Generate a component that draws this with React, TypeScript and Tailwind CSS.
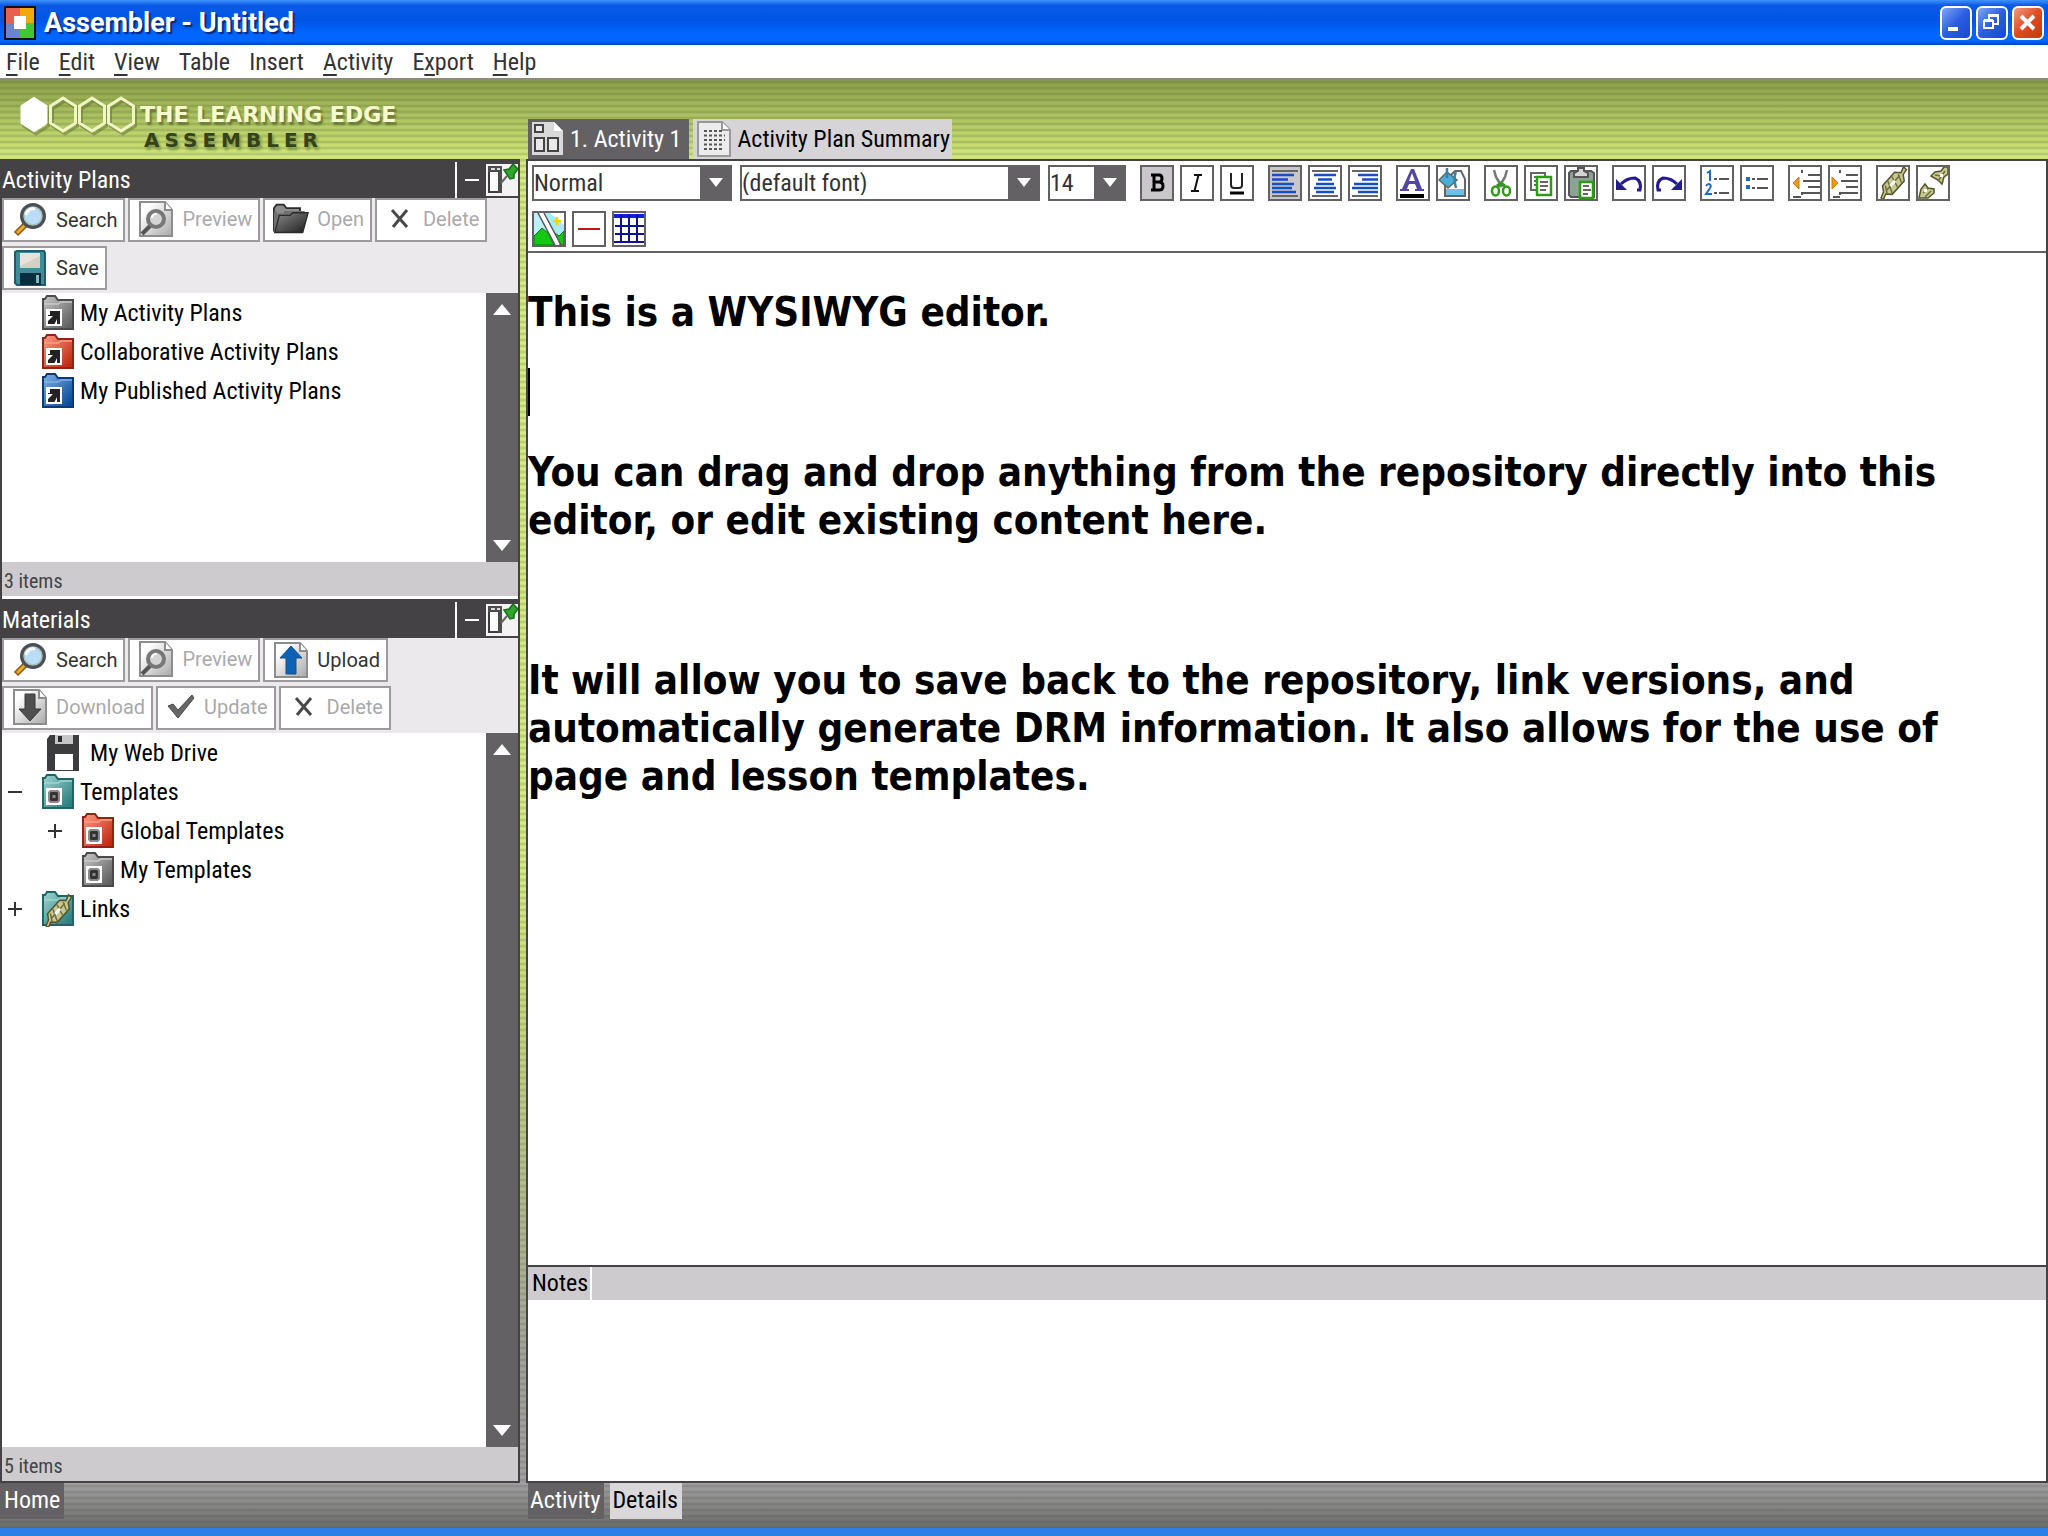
import type { ReactNode } from 'react';

const menus = [
    ['', 'F', 'ile'],
    ['', 'E', 'dit'],
    ['', 'V', 'iew'],
    ['Table', '', ''],
    ['Insert', '', ''],
    ['', 'A', 'ctivity'],
    ['E', 'x', 'port'],
    ['', 'H', 'elp'],
];

const folderColors: Record<string, [string, string, string]> = {
    gray: ['#c9c9c9', '#5f5f5f', '#4a4a4a'],
    red: ['#ff9c86', '#c22a12', '#8e2414'],
    blue: ['#7fb4ea', '#0a4a97', '#083a78'],
    teal: ['#9ed6d2', '#2a7f80', '#1f6466'],
};

/* ---------- icons ---------- */

function Rope({ x = 0, y = 0 }: { x?: number; y?: number }) {
    return (
        <g transform={`translate(${x} ${y}) rotate(-48)`} fill="none">
            <path d="M-19 1l6-2 4-5h18l4 5 6-2v4l-6 1-4 5H-9l-4-5-6 2z" fill="#c8c893" stroke="#55552c" strokeWidth="1.500" />
            <path d="M-12 3L-7-4M-8 6l6-11M0 6l4-11M6 6l4-8" stroke="#6f6f3e" strokeWidth="1.500" />
            <path d="M-10 0h20" stroke="#6f6f3e" strokeWidth="1.500" />
            <path d="M-4 0h7" stroke="#fff" strokeWidth="3" />
        </g>
    );
}

function Folder({ color, badge }: { color: string; badge: 'arrow' | 'gear' | 'chain' }) {
    const [light, dark, edge] = folderColors[color];
    const id = `folder-${color}-${badge}`;
    return (
        <svg width="32" height="36" viewBox="0 0 32 36">
            <defs>
                <linearGradient id={id} x1="0" y1="0" x2="1" y2="1">
                    <stop offset="0" stopColor={light} />
                    <stop offset="0.9" stopColor={dark} />
                </linearGradient>
            </defs>
            <path d="M1 34V4h2l2-3h8l3 4h15v29z" fill={`url(#${id})`} stroke={edge} strokeWidth="2" />
            <path d="M2 9h14l3-2h11" fill="none" stroke={light} strokeWidth="1.5" />
            {badge !== 'chain' && <path d="M4 14h16v17H4z" fill="#fff" />}
            {badge === 'arrow' && (
                <>
                    <path d="M6 16h12v13H6z" fill="#222" />
                    <path d="M5 15h3v5H5zM5 21h6l-6 6zM12 30l3-6v6z" fill="#fff" />
                </>
            )}
            {badge === 'gear' && (
                <>
                    <path d="M8 16h8l2 2v9l-2 2H8l-2-2v-9z" fill="#8a8a8a" />
                    <path d="M9 18h6l1 1v7l-1 1H9l-1-1v-7z" fill="#333" />
                    <path d="M10.500 21h3v3h-3z" fill="#8a8a8a" />
                </>
            )}
            {badge === 'chain' && <Rope x={16} y={20} />}
        </svg>
    );
}

function Page({ children }: { children: ReactNode }) {
    return (
        <svg width="34" height="36" viewBox="0 0 34 36">
            <defs>
                <linearGradient id="page" x1="0" y1="0" x2="1" y2="1">
                    <stop offset="0.2" stopColor="#fff" />
                    <stop offset="1" stopColor="#a9a9a9" />
                </linearGradient>
            </defs>
            <path d="M1 1h25l7 8v26H1z" fill="url(#page)" stroke="#8d8d8d" strokeWidth="2" />
            <path d="M26 1v8h7" fill="#fff" stroke="#8d8d8d" strokeWidth="2" />
            {children}
        </svg>
    );
}

const SearchIcon = () => (
    <svg width="34" height="36" viewBox="0 0 34 36">
        <path d="M3 32l9-9" stroke="#8a5a0c" strokeWidth="6" />
        <path d="M4 31l9-9" stroke="#f0a92a" strokeWidth="3" />
        <circle cx="20" cy="14" r="11" fill="#b9dcf8" stroke="#4b5058" strokeWidth="4" />
        <circle cx="20" cy="14" r="9" fill="none" stroke="#a8c4b4" strokeWidth="1.500" />
        <path d="M13 13a7 7 0 0 1 9-6" fill="none" stroke="#fff" strokeWidth="3" />
    </svg>
);

const PreviewIcon = () => (
    <Page>
        <path d="M3 33l8-8" stroke="#555" strokeWidth="4" />
        <circle cx="17" cy="18" r="8" fill="#d4d4d4" stroke="#777" strokeWidth="4" />
        <path d="M13 17a4 4 0 0 1 5-4" fill="none" stroke="#fff" strokeWidth="2" />
    </Page>
);

const OpenIcon = () => (
    <svg width="38" height="34" viewBox="0 0 40 34">
        <defs>
            <linearGradient id="open" x1="0" y1="0" x2="1" y2="1">
                <stop offset="0" stopColor="#8b8b8b" />
                <stop offset="1" stopColor="#1d1d1d" />
            </linearGradient>
        </defs>
        <path d="M1 31V5l3-4h8l3 4h15v6" fill="#8d8d8d" stroke="#2b2b2b" strokeWidth="2" />
        <path d="M1 31V9l3-1v3h8v-3h24" fill="#707070" />
        <path d="M2 32l5-19h12l3-3h17l-6 22z" fill="url(#open)" stroke="#2b2b2b" strokeWidth="1.500" />
    </svg>
);

const DeleteIcon = () => (
    <svg width="20" height="22" viewBox="0 0 20 22">
        <path d="M2 2l15 17M17 2L3 19" fill="none" stroke="#4a4a4a" strokeWidth="3" />
    </svg>
);

const SaveIcon = () => (
    <svg width="32" height="36" viewBox="0 0 32 36">
        <path d="M1 2l2-1h27l1 2v32H3l-2-2z" fill="#3f8b98" stroke="#245a6b" strokeWidth="2" />
        <path d="M6 3h20v15H6z" fill="#d5d0c4" />
        <path d="M6 3h20v3L6 16z" fill="#e6e3da" />
        <path d="M6 23h21v12H6z" fill="#0b2c3c" />
        <path d="M22 25h3v8h-3z" fill="#7fb8c4" />
    </svg>
);

const UploadIcon = () => (
    <Page>
        <path d="M17 4l11 12h-6v16H12V16H6z" fill="#0d62b5" stroke="#1a4f8a" />
    </Page>
);

const DownloadIcon = () => (
    <Page>
        <path d="M17 32L6 20h6V5h10v15h6z" fill="#4f4f4f" stroke="#3a3a3a" />
    </Page>
);

const UpdateIcon = () => (
    <svg width="28" height="26" viewBox="0 0 28 26">
        <path d="M1 12l5-2 5 6L25 1l2 3-16 20z" fill="#666" stroke="#4a4a4a" />
    </svg>
);

const DriveIcon = () => (
    <svg width="32" height="36" viewBox="0 0 32 36">
        <path d="M0 4l3-4h29v36H0z" fill="#3c3c3e" />
        <path d="M8 0h18v9H8z" fill="#c6c6c8" />
        <path d="M11 1h4v6h-4z" fill="#2a2a2a" />
        <path d="M8 19h18v16H8z" fill="#fff" />
    </svg>
);

const PinIcon = () => (
    <svg width="32" height="32" viewBox="0 0 32 32">
        <path d="M0 0h32v32H0z" fill="#f3f3f3" />
        <path d="M3 3h12v25H3z" fill="#fff" stroke="#3c3c3c" strokeWidth="2" />
        <path d="M2 2h14v6H2zM12 8h4v21h-4z" fill="#4c4c4c" />
        <path d="M5 5h4M11 5h3" stroke="#ddd" strokeWidth="2" />
        <path d="M15 19l6-7" stroke="#666" strokeWidth="2" />
        <path d="M18 6l5-1 4-5 5 5-4 5v4l-4 1z" fill="#2fa52b" stroke="#17701a" strokeWidth="1.500" />
    </svg>
);

/* ---------- left column ---------- */

function ToolButton({ icon, label, disabled, narrow }: { icon: ReactNode; label: string; disabled?: boolean; narrow?: boolean }) {
    return (
        <button
            disabled={disabled}
            className="flex h-11 items-center gap-2 border-2 border-[#9c9a9d] bg-white pr-1.5 pl-2 font-[Roboto,sans-serif] text-xl text-[#333] disabled:pb-0.5 disabled:text-[#aaa8ab]"
        >
            <span className={narrow ? 'flex w-[30px] justify-center' : 'flex w-9 justify-center'}>{icon}</span>
            {label}
        </button>
    );
}

function PanelHeader({ title }: { title: string }) {
    return (
        <header className="flex h-[39px] shrink-0 items-center bg-[#444244] pt-0.5 text-white">
            <h2 className="flex-1">{title}</h2>
            <button aria-label="Minimize panel" className="flex h-9 w-[31px] items-center justify-center border-l-2 border-white">
                <span className="h-0.5 w-3.5 bg-white" />
            </button>
            <button aria-label="Pin panel">
                <PinIcon />
            </button>
        </header>
    );
}

function ScrollBar() {
    return (
        <div className="flex w-8 shrink-0 flex-col items-center justify-between bg-[#636163] py-[11px]">
            <button aria-label="Scroll up">
                <svg width="18" height="11" viewBox="0 0 18 11"><path d="M9 0l9 11H0z" fill="#fff" /></svg>
            </button>
            <button aria-label="Scroll down">
                <svg width="18" height="11" viewBox="0 0 18 11"><path d="M9 11l9-11H0z" fill="#fff" /></svg>
            </button>
        </div>
    );
}

function TreeItem({ icon, label, sign, nested, wide }: { icon: ReactNode; label: string; sign?: string; nested?: boolean; wide?: boolean }) {
    return (
        <li className={nested ? 'flex h-[39px] items-center pl-10' : 'flex h-[39px] items-center'}>
            <span className="flex w-10 pl-1.5">
                {sign && (
                    <button aria-label={sign === '+' ? 'Expand' : 'Collapse'}>
                        <svg width="14" height="14" viewBox="0 0 14 14">
                            <path d={sign === '+' ? 'M0 7h14M7 0v14' : 'M0 7h14'} stroke="#333" strokeWidth="2" />
                        </svg>
                    </button>
                )}
            </span>
            <span className={wide ? 'flex w-[42px] justify-center' : 'flex w-8'}>{icon}</span>
            <span className="pl-1.5">{label}</span>
        </li>
    );
}

/* ---------- editor toolbar ---------- */

function Combo({ label, value, className }: { label: string; value: string; className: string }) {
    return (
        <div className={className}>
            <select aria-label={label} className="h-9 w-full appearance-none border-2 border-[#636163] bg-white text-2xl leading-none text-[#333]">
                <option>{value}</option>
            </select>
            <span className="pointer-events-none absolute inset-y-0 right-0 flex w-8 items-center justify-center bg-[#636163]">
                <svg width="14" height="10" viewBox="0 0 14 10"><path d="M0 0h14L7 9z" fill="#fff" /></svg>
            </span>
        </div>
    );
}

function IconButton({ label, active, children }: { label: string; active?: boolean; children: ReactNode }) {
    return (
        <button
            aria-label={label}
            className={active ? 'h-9 w-[34px] border-2 border-[#636163] bg-[#c9c7ca]' : 'h-9 w-[34px] border-2 border-[#636163] bg-white'}
        >
            <svg width="30" height="32" viewBox="0 0 30 32" fill="none">{children}</svg>
        </button>
    );
}

function AlignLines({ d }: { d: string }) {
    return (
        <>
            <path d="M2 4h26M2 29h26" stroke="#666" strokeWidth="2" />
            <path d={d} stroke="#1450c0" strokeWidth="2.500" />
        </>
    );
}

const editGroups: { label: string; active?: boolean; icon: ReactNode }[][] = [
    [
        { label: 'Bold', active: true, icon: <path d="M9 8h8q3 0 3 3.500t-3 3.500q4 0 4 4t-4 4H9M12 7v17M12 15h6" stroke="#000" strokeWidth="3" /> },
        { label: 'Italic', icon: <path d="M12 8h8M9 24h8M16.500 8l-4 16" stroke="#111" strokeWidth="2" /> },
        { label: 'Underline', icon: <><path d="M9 6v12q0 3 3 3h5q3 0 3-3V6" stroke="#222" strokeWidth="2" /><path d="M8 26h14" stroke="#000" strokeWidth="3" /></> },
    ],
    [
        { label: 'Align left', active: true, icon: <AlignLines d="M2 8h22M2 12.500h16M2 17h22M2 21h20M2 25h24" /> },
        { label: 'Center', icon: <AlignLines d="M4 8h22M8 12.500h14M6 17h18M4 21h22M6 25h18" /> },
        { label: 'Align right', icon: <AlignLines d="M8 8h20M12 12.500h16M4 17h24M2 21h26M8 25h20" /> },
    ],
    [
        {
            label: 'Text color',
            icon: <><path d="M13 2h3l8 20h2v2h-9v-2h2l-2-5h-6l-2 5h2v2H2v-2h2zM14 6l-3 8h6z" fill="#5247a0" /><path d="M2 27h24v4H2z" fill="#000" /></>,
        },
        {
            label: 'Fill color',
            icon: (
                <>
                    <path d="M7 29V14l10-10h6l4 8v17z" fill="#fff" stroke="#666" strokeWidth="2" />
                    <path d="M8 22h18v6H8z" fill="#6cc0ea" />
                    <path d="M1 13L9 5l10 8-9 8z" fill="#4aaed6" stroke="#666" strokeWidth="1.500" />
                    <path d="M9 11V1M18 5q-3 5 0 16" stroke="#2c86b0" strokeWidth="2.500" />
                </>
            ),
        },
    ],
    [
        {
            label: 'Cut',
            icon: (
                <>
                    <path d="M8 3l2 7 6 10M21 3l-2 7-6 10" stroke="#777" strokeWidth="2.500" />
                    <ellipse cx="9.500" cy="24" rx="3.500" ry="4.500" stroke="#2f9a16" strokeWidth="2.500" />
                    <ellipse cx="20.500" cy="24" rx="3.500" ry="4.500" stroke="#2f9a16" strokeWidth="2.500" />
                    <path d="M11 19l4-3 4 3" stroke="#2f9a16" strokeWidth="3" />
                </>
            ),
        },
        {
            label: 'Copy',
            icon: (
                <>
                    <path d="M5 6h14v17H5z" fill="#fff" stroke="#666" strokeWidth="2" />
                    <path d="M8 10h8M8 14h4M8 18h4" stroke="#666" strokeWidth="2" />
                    <path d="M11 10h14v18H11z" fill="#fff" stroke="#2f9a16" strokeWidth="2.500" />
                    <path d="M14 15h8M14 19h8M14 23h6" stroke="#666" strokeWidth="2" />
                </>
            ),
        },
        {
            label: 'Paste',
            icon: (
                <>
                    <path d="M3 6l2-2h20l3 2v24H5l-2-2z" fill="#8ba395" stroke="#555" strokeWidth="2" />
                    <path d="M8 10V6l4-2V1h6v3l4 2v4z" fill="#d5d5d5" stroke="#555" strokeWidth="2" />
                    <path d="M14 15h13v16H14z" fill="#fff" stroke="#2f9a16" strokeWidth="2.500" />
                    <path d="M17 19h6M17 23h8M17 27h5" stroke="#666" strokeWidth="2" />
                </>
            ),
        },
    ],
    [
        { label: 'Undo', icon: <><path d="M7 17q6-6 14-6 7 3 5 12h-3" stroke="#241c8c" strokeWidth="3" /><path d="M2 12v11h11z" fill="#241c8c" /></> },
        { label: 'Redo', icon: <><path d="M23 17q-6-6-14-6-7 3-5 12h3" stroke="#241c8c" strokeWidth="3" /><path d="M28 12v11H17z" fill="#241c8c" /></> },
    ],
    [
        {
            label: 'Numbered list',
            icon: <><path d="M5 6l3-2v10M4 19q1-2 3-2 3 1 1 4l-4 6h6" stroke="#1a6fc4" strokeWidth="2" /><path d="M12 12h3M17 12h10M12 26h3M17 26h10" stroke="#555" strokeWidth="2" /></>,
        },
        {
            label: 'Bulleted list',
            icon: <><path d="M4 10h4v4H4zM4 18h4v4H4z" fill="#1a6fc4" /><path d="M10 12h3M15 12h11M10 21h3M15 21h11" stroke="#555" strokeWidth="2" /></>,
        },
    ],
    [
        {
            label: 'Outdent',
            icon: <><path d="M3 16l6-6v12z" fill="#f09a10" stroke="#c67d10" /><path d="M18 8h12M13 14h17M18 20h12M13 26h17M3 30h8M12 3v3M12 25v3" stroke="#555" strokeWidth="2" /></>,
        },
        {
            label: 'Indent',
            icon: <><path d="M8 16l-6-6v12z" fill="#f09a10" stroke="#c67d10" /><path d="M16 8h12M11 14h17M16 20h12M11 26h17M3 30h7M10 3v3M10 25v3" stroke="#555" strokeWidth="2" /></>,
        },
    ],
    [
        { label: 'Insert link', icon: <Rope x={15} y={16} /> },
        {
            label: 'Remove link',
            icon: (
                <>
                    <path d="M1 31l2-9 4-5 3 4 6 1v4l-6 5zM13 9l4-4 6-1 3-4h4v7l-4 3-2 7-4-4z" fill="#c8c893" stroke="#55552c" strokeWidth="1.500" />
                    <path d="M5 26l5-5M7 30l6-6M17 8l6 1M20 14l7-10" stroke="#6f6f3e" strokeWidth="1.500" />
                    <path d="M6 22h3v3H6zM22 7h3v3h-3z" fill="#fff" />
                </>
            ),
        },
    ],
    [
        {
            label: 'Insert image',
            icon: (
                <>
                    <path d="M0 0h5l16 32H0z" fill="#bdf2fb" />
                    <path d="M11 0h19v32h-3z" fill="#a5ecf8" />
                    <path d="M16 0h14v12z" fill="#fff" />
                    <path d="M0 23l8-8 6 5 6 12H0zM21 20l4 3 5-5v14h-4z" fill="#12c812" stroke="#0a7a0a" />
                    <path d="M23 4v9M19 8h8" stroke="#f2d800" strokeWidth="2.500" />
                    <path d="M7 0l17 32" stroke="#fff" strokeWidth="6" />
                    <path d="M4 0l17 32M10 0l17 32" stroke="#555" strokeWidth="1.500" />
                </>
            ),
        },
        { label: 'Horizontal line', icon: <path d="M4 16h22" stroke="#c41414" strokeWidth="2" /> },
        {
            label: 'Insert table',
            icon: <><path d="M0 1h30v4H0z" fill="#1020e0" /><path d="M1 13h29M1 21h29M0 29h30M7 2v28M15 2v28M23 2v28" stroke="#101099" strokeWidth="2" /></>,
        },
    ],
];

function Logo() {
    return (
        <div className="flex w-[528px] items-start pt-[18px] pl-5 font-['DejaVu_Sans',sans-serif] font-bold">
            <svg width="120" height="42" viewBox="0 0 120 42" fill="none">
                <g stroke="#5d7034" strokeOpacity="0.5" strokeWidth="3" transform="translate(2 3)">
                    <path d="M14 2l12.500 8v17L14 35 1.500 27V10zM43 2l12.500 8v17L43 35l-12.500-8V10zM72 2l12.500 8v17L72 35l-12.500-8V10zM101 2l12.500 8v17L101 35l-12.500-8V10z" />
                </g>
                <path d="M14 2l12.500 8v17L14 35 1.500 27V10z" fill="#fff" stroke="#fff" strokeWidth="2" />
                <path d="M43 2l12.500 8v17L43 35l-12.500-8V10zM72 2l12.500 8v17L72 35l-12.500-8V10zM101 2l12.500 8v17L101 35l-12.500-8V10z" stroke="#f0f7c4" strokeWidth="3" />
            </svg>
            <div className="pt-1.5">
                <p className="text-[22px] leading-[26px] text-[#f6facc] [text-shadow:2px_3px_2px_#66783a]">THE LEARNING EDGE</p>
                <p className="pl-1 text-xl leading-6 tracking-[0.25em] text-[#34431a] [text-shadow:2px_3px_3px_#7c9145]">ASSEMBLER</p>
            </div>
        </div>
    );
}

export default function App() {
    return (
        <div className="flex h-screen flex-col bg-white font-['Roboto_Condensed','DejaVu_Sans_Condensed',sans-serif] text-2xl leading-none text-black">
            {/* Title bar */}
            <div className="flex h-[45px] shrink-0 items-center gap-2 bg-[linear-gradient(#3f94ff_0,#0a5ae6_12%,#0055e5_45%,#0066ff_75%,#0066ff_92%,#0040b8_100%)] px-1">
                <svg width="32" height="34" viewBox="0 0 32 34">
                    <path d="M0 0h32v34H0z" fill="#111" />
                    <path d="M2 2h14v15H2z" fill="#e8604f" />
                    <path d="M16 2h14v15H16z" fill="#f2a90c" />
                    <path d="M2 17h14v15H2z" fill="#6b86cf" />
                    <path d="M16 17h14v15H16z" fill="#3fc92c" />
                    <path d="M10 10h12v13H10z" fill="#fff" />
                </svg>
                <h1 className="flex-1 pt-0.5 font-[Roboto,sans-serif] text-[27px] font-bold text-white [text-shadow:2px_2px_1px_#0a2a80]">Assembler - Untitled</h1>
                <div className="flex gap-1">
                    <button aria-label="Minimize" className="h-[34px] w-8 rounded-md border-2 border-white bg-[linear-gradient(135deg,#7fa6f5,#2a5ee0_50%,#1b48d0)]">
                        <svg width="28" height="30" viewBox="0 0 28 30"><path d="M6 19h10v4H6z" fill="#fff" /></svg>
                    </button>
                    <button aria-label="Restore" className="h-[34px] w-8 rounded-md border-2 border-white bg-[linear-gradient(135deg,#7fa6f5,#2a5ee0_50%,#1b48d0)]">
                        <svg width="28" height="30" viewBox="0 0 28 30" fill="none" stroke="#fff" strokeWidth="2">
                            <path d="M11 13V7h9v9h-5M6 13h9v7H6z" />
                            <path d="M6 12.500h9M11 7.500h9" strokeWidth="3" />
                        </svg>
                    </button>
                    <button aria-label="Close" className="h-[34px] w-8 rounded-md border-2 border-white bg-[linear-gradient(135deg,#f09a80,#e04a20_50%,#c23a10)]">
                        <svg width="28" height="30" viewBox="0 0 28 30"><path d="M7 8l13 13M20 8L7 21" stroke="#fff" strokeWidth="4" /></svg>
                    </button>
                </div>
            </div>

            <nav className="flex h-[33px] shrink-0 items-center gap-[19px] px-1.5 text-[#333]">
                {menus.map(([before, key, after]) => (
                    <button key={before + key + after}>
                        {before}
                        <span className="underline decoration-2 underline-offset-4">{key}</span>
                        {after}
                    </button>
                ))}
            </nav>

            <div className="flex min-h-0 flex-1 flex-col bg-[repeating-linear-gradient(#0000_0,#0000_2px,#38421f38_4px,#0000_6px),linear-gradient(#8c8c78_0,#8c8c78_2px,#8ba04a_3px,#d4ea7c_81px,#d4ea7c_800px,#a0a09c_1300px,#a2a0a2_1405px,#6c6c6c_1450px)]">
                <div className="flex h-[81px] shrink-0">
                    <Logo />
                    <div className="flex items-end gap-1">
                        <button className="flex h-10 items-center gap-1.5 bg-[#636163] pr-2 pl-1 text-white">
                            <svg width="32" height="36" viewBox="0 0 32 36">
                                <path d="M0 1h22l9 9v24H0z" fill="#d9d9d9" />
                                <path d="M22 1v9h9z" fill="#fff" />
                                <path d="M3 4h8v7H3zM3 17h9v13H3zM16 17h10v13H16z" fill="#e9e9e9" stroke="#444" strokeWidth="2" />
                            </svg>
                            1. Activity 1
                        </button>
                        <button className="flex h-10 items-center gap-1.5 bg-[#d6d4d7] pr-0.5 pl-1">
                            <svg width="34" height="36" viewBox="0 0 34 36">
                                <path d="M1 1h24l8 8v26H1z" fill="#ececec" stroke="#999" strokeWidth="2" />
                                <path d="M25 1v8h8" fill="#fff" stroke="#999" strokeWidth="2" />
                                <path d="M7 10h18M7 14.500h21M7 19h21M7 23.500h18M7 28h19" stroke="#555" strokeWidth="2" strokeDasharray="3 2" />
                            </svg>
                            Activity Plan Summary
                        </button>
                    </div>
                </div>

                <div className="flex min-h-0 flex-1 gap-1.5">
                    <aside className="flex w-[520px] shrink-0 flex-col border-x-2 border-b-2 border-[#444244] bg-white">
                        <PanelHeader title="Activity Plans" />
                        <div className="flex h-[95px] shrink-0 flex-wrap content-start gap-x-[3px] gap-y-1 bg-[#ebe9ec]">
                            <ToolButton icon={<SearchIcon />} label="Search" />
                            <ToolButton icon={<PreviewIcon />} label="Preview" disabled />
                            <ToolButton icon={<OpenIcon />} label="Open" disabled />
                            <ToolButton icon={<DeleteIcon />} label="Delete" disabled narrow />
                            <ToolButton icon={<SaveIcon />} label="Save" />
                        </div>
                        <div className="flex h-[269px] shrink-0">
                            <ul className="flex-1">
                                <TreeItem icon={<Folder color="gray" badge="arrow" />} label="My Activity Plans" />
                                <TreeItem icon={<Folder color="red" badge="arrow" />} label="Collaborative Activity Plans" />
                                <TreeItem icon={<Folder color="blue" badge="arrow" />} label="My Published Activity Plans" />
                            </ul>
                            <ScrollBar />
                        </div>
                        <p className="mb-[3px] flex h-[34px] shrink-0 items-center bg-[#cdcbce] pt-1 pl-0.5 text-xl text-[#444]">3 items</p>

                        <PanelHeader title="Materials" />
                        <div className="flex h-[95px] shrink-0 flex-wrap content-start gap-x-[3px] gap-y-1 bg-[#ebe9ec] pr-24">
                            <ToolButton icon={<SearchIcon />} label="Search" />
                            <ToolButton icon={<PreviewIcon />} label="Preview" disabled />
                            <ToolButton icon={<UploadIcon />} label="Upload" />
                            <ToolButton icon={<DownloadIcon />} label="Download" disabled />
                            <ToolButton icon={<UpdateIcon />} label="Update" disabled narrow />
                            <ToolButton icon={<DeleteIcon />} label="Delete" disabled narrow />
                        </div>
                        <div className="flex min-h-0 flex-1">
                            <ul className="flex-1">
                                <TreeItem icon={<DriveIcon />} label="My Web Drive" wide />
                                <TreeItem icon={<Folder color="teal" badge="gear" />} label="Templates" sign="-" />
                                <TreeItem icon={<Folder color="red" badge="gear" />} label="Global Templates" sign="+" nested />
                                <TreeItem icon={<Folder color="gray" badge="gear" />} label="My Templates" nested />
                                <TreeItem icon={<Folder color="teal" badge="chain" />} label="Links" sign="+" />
                            </ul>
                            <ScrollBar />
                        </div>
                        <p className="flex h-[34px] shrink-0 items-center bg-[#cdcbce] pt-1 pl-0.5 text-xl text-[#444]">5 items</p>
                    </aside>

                    <main className="flex min-w-0 flex-1 flex-col border-2 border-[#444244] bg-white">
                        <div className="flex flex-wrap gap-x-3.5 gap-y-2.5 border-b-2 border-[#636163] p-1">
                            <div className="flex gap-2">
                                <Combo label="Paragraph style" value="Normal" className="relative w-[200px]" />
                                <Combo label="Font" value="(default font)" className="relative w-[300px]" />
                                <Combo label="Font size" value="14" className="relative w-[78px]" />
                            </div>
                            {editGroups.map((group) => (
                                <div key={group[0].label} className="flex gap-1.5">
                                    {group.map(({ label, active, icon }) => (
                                        <IconButton key={label} label={label} active={active}>{icon}</IconButton>
                                    ))}
                                </div>
                            ))}
                        </div>

                        <div
                            contentEditable
                            suppressContentEditableWarning
                            className="flex min-h-0 flex-1 flex-col gap-8 overflow-hidden pt-[35px] pr-2 font-['DejaVu_Sans_Condensed','DejaVu_Sans',sans-serif] text-[40px] leading-[48px] font-bold outline-none"
                        >
                            <p>This is a WYSIWYG editor.</p>
                            <p className="h-12 border-l-2 border-black" />
                            <p>You can drag and drop anything from the repository directly into this editor, or edit existing content here.</p>
                            <p className="h-12" />
                            <p>It will allow you to save back to the repository, link versions, and automatically generate DRM information. It also allows for the use of page and lesson templates.</p>
                        </div>

                        <div className="flex h-[35px] shrink-0 border-t-2 border-[#444244] bg-[#cdcbce]">
                            <label htmlFor="notes" className="flex items-center border-r-2 border-white pr-0.5 pb-0.5 pl-1">Notes</label>
                        </div>
                        <textarea id="notes" className="h-[181px] shrink-0 resize-none outline-none" />
                    </main>
                </div>

                {/* Bottom tabs */}
                <div className="flex h-[45px] shrink-0 items-start">
                    <div className="w-[528px]">
                        <button className="h-9 bg-[#636163] px-1 pb-0.5 text-white">Home</button>
                    </div>
                    <div className="flex gap-1.5">
                        <button className="h-9 bg-[#636163] pr-1 pb-0.5 pl-0.5 text-white">Activity</button>
                        <button className="h-9 bg-[#d9d7da] pr-1 pb-0.5 pl-0.5">Details</button>
                    </div>
                </div>
            </div>
            <div className="h-2 shrink-0 bg-[#2b80e8]" />
        </div>
    );
}
